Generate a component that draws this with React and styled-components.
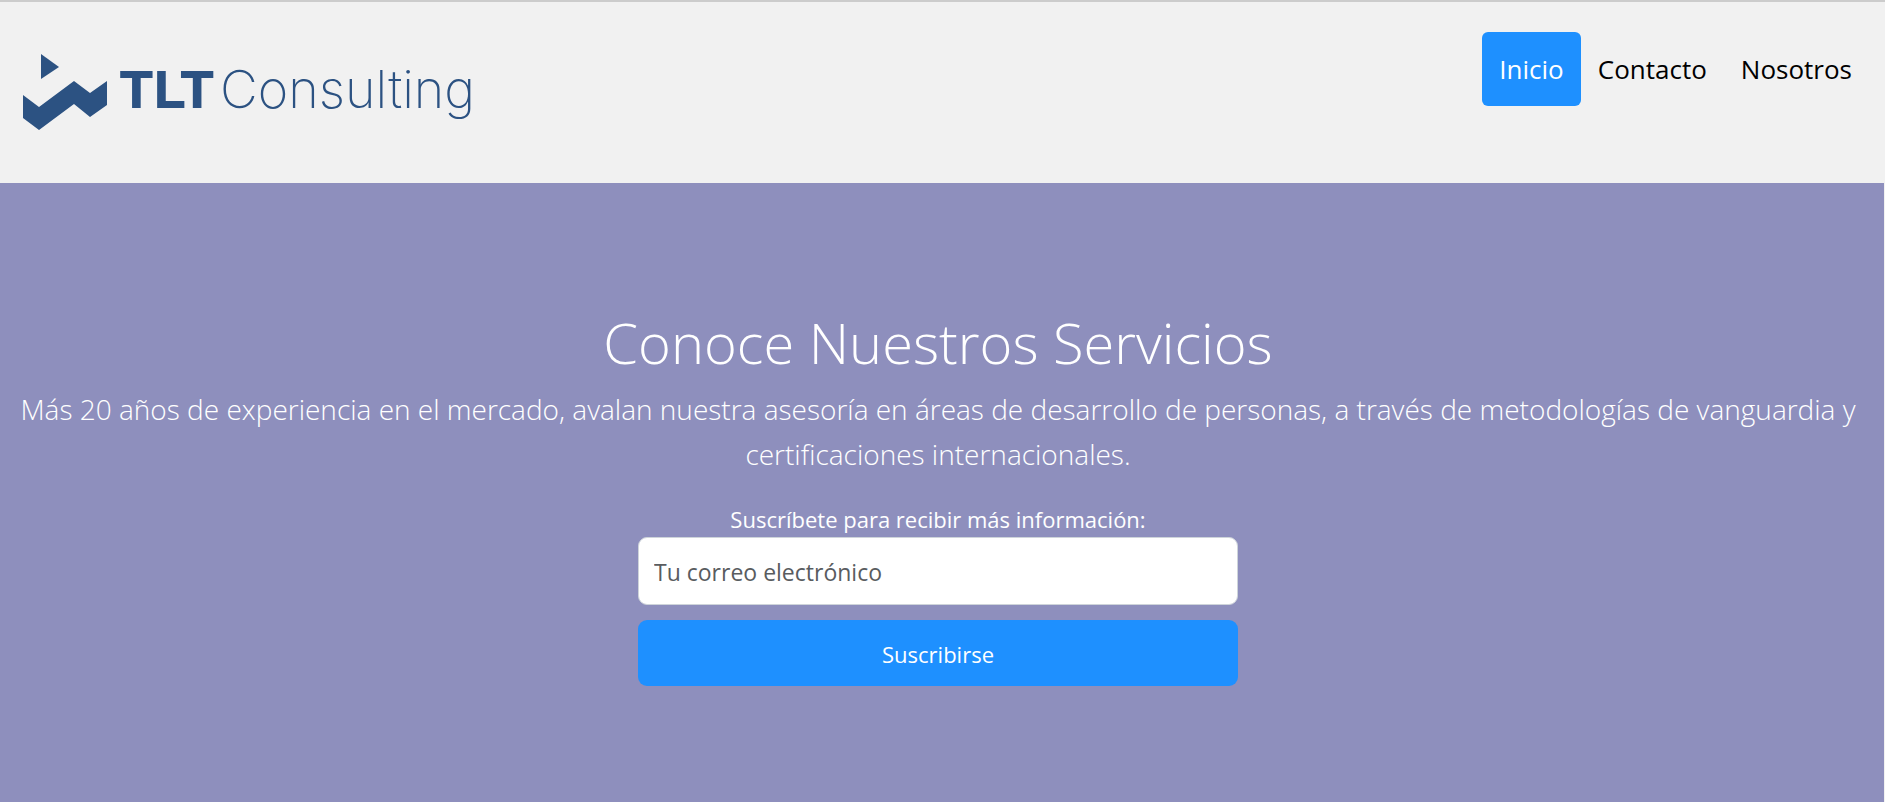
import React from 'react';
import styled, { createGlobalStyle } from 'styled-components';

const GlobalStyle = createGlobalStyle`
  *, *::before, *::after { box-sizing: border-box; }
  body {
    margin: 0;
    background: #f1f1f1;
    color: #000;
    font-family: "Segoe UI", "Open Sans", "Noto Sans", sans-serif;
  }
`;

const Page = styled.div`
  display: flex;
  flex-direction: column;
  min-height: 100vh;
  border-top: 2px solid #ccc;
`;

const Header = styled.header`
  display: flex;
  flex-wrap: wrap;
  justify-content: space-between;
  align-items: flex-start;
  gap: 16px;
  min-height: 181px;
  padding: 30px 16px 30px 23px;
`;

const LogoLink = styled.a`
  display: block;
  margin-top: 18px;
  color: #2c5282;
  text-decoration: none;
`;

const LogoDrawing = styled.svg`
  display: block;
  fill: currentColor;
`;

const LogoStrong = styled.text`
  font-family: Montserrat, Lato, sans-serif;
  font-size: 53px;
  font-weight: 700;
`;

const LogoLight = styled.text`
  font-family: Inter, sans-serif;
  font-size: 52px;
  font-weight: 200;
`;

const Nav = styled.nav`
  display: flex;
`;

const NavLink = styled.a`
  padding: 18px 17px;
  border-radius: 6px;
  background: ${(p) => (p.$active ? '#1e90ff' : 'transparent')};
  color: ${(p) => (p.$active ? '#fff' : '#000')};
  font-size: 26px;
  line-height: 38px;
  text-decoration: none;
`;

const Hero = styled.main`
  flex: 1;
  margin-right: 1px;
  padding: 123px 24px 120px 16px;
  background: #8e8fbd;
  color: #fff;
  text-align: center;
`;

const Title = styled.h1`
  margin: 0 0 9px;
  font-size: 56px;
  font-weight: 300;
  line-height: 72px;
`;

const Lead = styled.p`
  margin: 0 0 24px;
  font-size: 28px;
  font-weight: 300;
  line-height: 45px;
`;

const Form = styled.form`
  display: flex;
  flex-direction: column;
  max-width: 600px;
  margin: 0 auto;
  font-size: 22px;
  line-height: 36px;
`;

const EmailInput = styled.input`
  height: 68px;
  margin-bottom: 15px;
  padding: 2px 15px 0;
  border: 1px solid #ced4da;
  border-radius: 9px;
  background: #fff;
  color: #212529;
  font: inherit;
  font-size: 23px;

  &::placeholder { color: #595c5f; opacity: 1; }
`;

const SubmitButton = styled.button`
  height: 66px;
  padding: 2px 15px 0;
  border: 0;
  border-radius: 9px;
  background: #1e90ff;
  color: #fff;
  font: inherit;
  cursor: pointer;
`;

const links = [
  { label: 'Inicio', href: '#inicio', active: true },
  { label: 'Contacto', href: '#contacto' },
  { label: 'Nosotros', href: '#nosotros' },
];

function Logo() {
  return (
    <LogoDrawing width="470" height="84" viewBox="0 0 470 84">
      <path d="M18 4 L36 17 L18 29 Z" />
      <path d="M0 45 L16 57 L51 31 L67 43 L84 31 V55 L67 67 L51 54 L16 80 L0 68 Z" />
      <LogoStrong x="97" y="58">TLT</LogoStrong>
      <LogoLight x="197" y="58">Consulting</LogoLight>
    </LogoDrawing>
  );
}

export default function App() {
  return (
    <>
      <GlobalStyle />
      <Page>
        <Header>
          <LogoLink href="#inicio"><Logo /></LogoLink>
          <Nav>
            {links.map((l) => (
              <NavLink key={l.label} href={l.href} $active={l.active}>{l.label}</NavLink>
            ))}
          </Nav>
        </Header>
        <Hero>
          <Title>Conoce Nuestros Servicios</Title>
          <Lead>
            Más 20 años de experiencia en el mercado, avalan nuestra asesoría en áreas de desarrollo
            de personas, a través de metodologías de vanguardia y certificaciones internacionales.
          </Lead>
          <Form onSubmit={(e) => e.preventDefault()}>
            <label htmlFor="email">Suscríbete para recibir más información:</label>
            <EmailInput id="email" type="email" placeholder="Tu correo electrónico" />
            <SubmitButton type="submit">Suscribirse</SubmitButton>
          </Form>
        </Hero>
      </Page>
    </>
  );
}
